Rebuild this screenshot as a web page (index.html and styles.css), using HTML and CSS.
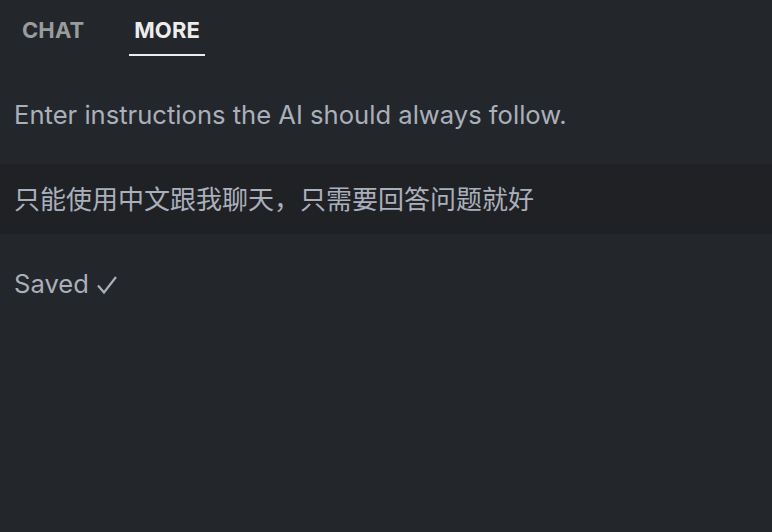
FILE: index.html
```html
<!DOCTYPE html>
<html lang="zh">
<head>
<meta charset="utf-8">
<link rel="stylesheet" href="styles.css">
</head>
<body>
<div class="app">
  <nav class="tabs">
    <div class="tab">CHAT</div>
    <div class="tab active">MORE</div>
  </nav>
  <p class="hint">Enter instructions the AI should always follow.</p>
  <div class="instructions">只能使用中文跟我聊天，只需要回答问题就好</div>
  <p class="status">Saved <svg class="check" width="20" height="18" viewBox="0 0 20 18" aria-label="✓"><polyline points="1,9.5 7,16.5 19,1" fill="none" stroke="currentColor" stroke-width="2.2"/></svg></p>
</div>
</body>
</html>
```
FILE: styles.css
```css
html, body {
  margin: 0;
  padding: 0;
  background: #23262b;
  height: 100%;
}
.app {
  font-family: Inter, "Noto Sans CJK SC", sans-serif;
  color: #aab0bb;
}
.tabs {
  display: flex;
  gap: 40px;
  padding: 17px 0 0 17px;
}
.tab {
  font-size: 22px;
  line-height: 26px;
  font-weight: 700;
  color: #9a9b9d;
  padding: 0 5px 11px;
  border-bottom: 2px solid transparent;
  letter-spacing: 0.1px;
}
.tab.active {
  color: #ececec;
  border-bottom-color: #ececec;
}
.hint {
  margin: 0;
  padding: 43px 14px 0;
  font-size: 25.6px;
  line-height: 32px;
}
.instructions {
  margin-top: 33px;
  background: #1f2125;
  height: 70px;
  box-sizing: border-box;
  display: flex;
  align-items: center;
  padding: 0 14px 4px;
  font-size: 26px;
  font-family: "Noto Sans CJK SC", sans-serif;
}
.status {
  margin: 0;
  padding: 34px 14px 0;
  font-size: 25.6px;
  line-height: 32px;
  display: flex;
  align-items: center;
  gap: 8px;
}
.check {
  display: block;
  margin-top: 1px;
}
```
